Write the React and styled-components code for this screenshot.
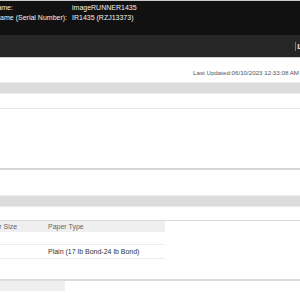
import React from "react";
import styled, { createGlobalStyle } from "styled-components";

const Global = createGlobalStyle`
  html, body { margin: 0; padding: 0; background: #fff; overflow: hidden; }
  body { font-family: "Liberation Sans", Arial, sans-serif; width: 300px; height: 300px; }
`;

const Page = styled.div`
  width: 300px;
  height: 300px;
  overflow: hidden;
  border-top: 1px solid #c9c9c9;
  box-sizing: border-box;
`;

const Header = styled.header`
  background: #111111;
  height: 34px;
  padding-top: 2px;
  box-sizing: border-box;
`;

const InfoGrid = styled.dl`
  margin: 0 0 0 -31px;
  display: grid;
  grid-template-columns: 103px auto;
  font-size: 7px;
  line-height: 10px;
  color: #f2f2f2;
  white-space: nowrap;
`;

const Label = styled.dt`
  margin: 0;
`;

const Value = styled.dd`
  margin: 0;
`;

const Nav = styled.nav`
  background: #262626;
  height: 22px;
  border-bottom: 1px solid #cfcfcf;
  display: flex;
  align-items: center;
  justify-content: flex-end;
  overflow: hidden;
`;

const NavButton = styled.span`
  flex-shrink: 0;
  margin-right: -28px;
  font-size: 8px;
  font-weight: bold;
  color: #e8e8e8;
  border-left: 1px solid #777;
  padding-left: 1px;
  line-height: 9px;
`;

const UpdatedRow = styled.div`
  height: 24px;
  display: flex;
  justify-content: flex-end;
  align-items: flex-end;
  padding: 0 1px 5px 0;
  box-sizing: border-box;
  font-size: 6.2px;
  line-height: 8px;
  color: #555;
  white-space: nowrap;
`;

const Band = styled.div`
  height: ${(p) => p.$h}px;
  background: #dcdcdc;
  border-top: 1px solid #ececec;
  border-bottom: 1px solid #ececec;
`;

const Gap = styled.div`
  height: ${(p) => p.$h}px;
  border-bottom: ${(p) => (p.$line ? `${p.$lw || 1}px solid ${p.$line}` : "none")};
`;

const TableSection = styled.section`
  border-top: 1px solid #dadada;
  height: 58px;
  border-bottom: 2px solid #dcdcdc;
`;

const Table = styled.table`
  margin-left: -20px;
  width: 185px;
  border-collapse: collapse;
  font-size: 7px;
  line-height: 9px;
  white-space: nowrap;
  table-layout: fixed;
`;

const HeadCell = styled.th`
  background: #efefef;
  color: #666;
  font-weight: normal;
  text-align: left;
  padding: 1px 0 1px 3px;
  width: ${(p) => p.$w || "auto"};
`;

const Cell = styled.td`
  color: #333;
  padding: 0 0 0 3px;
  height: ${(p) => p.$h}px;
  border-bottom: 1px solid #ededed;
  vertical-align: middle;
`;

const FooterBar = styled.div`
  width: 65px;
  height: 10px;
  background: #efefef;
`;

export default function App() {
  return (
    <>
      <Global />
      <Page>
        <Header>
          <InfoGrid>
            <Label>Device Name:</Label>
            <Value>imageRUNNER1435</Value>
            <Label>Product Name (Serial Number):</Label>
            <Value>IR1435 (RZJ13373)</Value>
          </InfoGrid>
        </Header>
        <Nav>
          <NavButton>Log Out</NavButton>
        </Nav>
        <UpdatedRow>Last Updated:06/10/2023 12:33:08 AM</UpdatedRow>
        <Band $h={10} />
        <Gap $h={14} $line="#e6e6e6" />
        <Gap $h={59} $line="#d6d6d6" $lw={2} />
        <Gap $h={25} />
        <Band $h={10} />
        <Gap $h={13} />
        <TableSection>
          <Table>
            <thead>
              <tr>
                <HeadCell $w="62px">Paper Size</HeadCell>
                <HeadCell>Paper Type</HeadCell>
              </tr>
            </thead>
            <tbody>
              <tr>
                <Cell $h={12}></Cell>
                <Cell $h={12}></Cell>
              </tr>
              <tr>
                <Cell $h={13}></Cell>
                <Cell $h={13}>Plain (17 lb Bond-24 lb Bond)</Cell>
              </tr>
            </tbody>
          </Table>
        </TableSection>
        <FooterBar />
      </Page>
    </>
  );
}
